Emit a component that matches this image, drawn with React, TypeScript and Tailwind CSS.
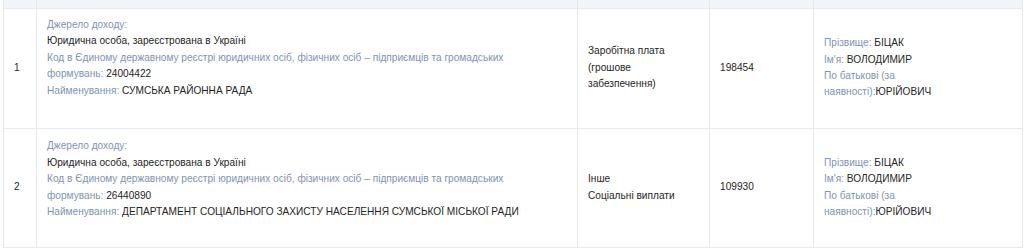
const rows = [
  {
    n: 1,
    code: "24004422",
    name: "СУМСЬКА РАЙОННА РАДА",
    kind: ["Заробітна плата (грошове забезпечення)"],
    sum: "198454",
  },
  {
    n: 2,
    code: "26440890",
    name: "ДЕПАРТАМЕНТ СОЦІАЛЬНОГО ЗАХИСТУ НАСЕЛЕННЯ СУМСЬКОЇ МІСЬКОЇ РАДИ",
    kind: ["Інше", "Соціальні виплати"],
    sum: "109930",
  },
];

function Label({ children }: { children: React.ReactNode }) {
  return <span className="text-[#8094b3]">{children}</span>;
}

export default function App() {
  return (
    <div className="w-[1024px] h-[249px] bg-white pl-[3px] pr-[2px] font-['Liberation_Sans',Arial,sans-serif] text-[10.15px] leading-[16.4px] text-[#262626]">
      <table className="w-[1019px] table-fixed border-collapse">
        <colgroup>
          <col className="w-[33px]" />
          <col className="w-[541px]" />
          <col className="w-[132px]" />
          <col className="w-[104px]" />
          <col className="w-[209px]" />
        </colgroup>
        <thead>
          <tr className="h-[8px] bg-[#f1f4f8]">
            <th className="border border-t-0 border-[#e6e9ee] p-0" />
            <th className="border border-t-0 border-[#e6e9ee] p-0" />
            <th className="border border-t-0 border-[#e6e9ee] p-0" />
            <th className="border border-t-0 border-[#e6e9ee] p-0" />
            <th className="border border-t-0 border-[#e6e9ee] p-0" />
          </tr>
        </thead>
        <tbody>
          {rows.map((r, i) => (
            <tr key={r.n} className={i === 0 ? "h-[120px]" : "h-[119px]"}>
              <td className="border border-[#e6e9ee] px-[10px] align-middle">{r.n}</td>
              <td className={`border border-[#e6e9ee] px-[10px] align-middle ${i === 0 ? "pb-[20px]" : "pb-[16px]"}`}>
                <div className="max-w-[490px]">
                  <div><Label>Джерело доходу:</Label></div>
                  <div>Юридична особа, зареєстрована в Україні</div>
                  <div>
                    <Label>
                      Код в Єдиному державному реєстрі юридичних осіб, фізичних осіб – підприємців та громадських
                      формувань:
                    </Label>{" "}
                    {r.code}
                  </div>
                  <div>
                    <Label>Найменування:</Label> {r.name}
                  </div>
                </div>
              </td>
              <td className="border border-[#e6e9ee] px-[10px] align-middle">
                {r.kind.map((k) => (
                  <div key={k}>{k}</div>
                ))}
              </td>
              <td className="border border-[#e6e9ee] px-[10px] align-middle">{r.sum}</td>
              <td className="border border-[#e6e9ee] px-[10px] align-middle">
                <div className="w-[116px]">
                  <div><Label>Прізвище:</Label> БІЦАК</div>
                  <div><Label>Ім'я:</Label> ВОЛОДИМИР</div>
                  <div><Label>По батькові (за наявності):</Label>ЮРІЙОВИЧ</div>
                </div>
              </td>
            </tr>
          ))}
        </tbody>
      </table>
    </div>
  );
}
